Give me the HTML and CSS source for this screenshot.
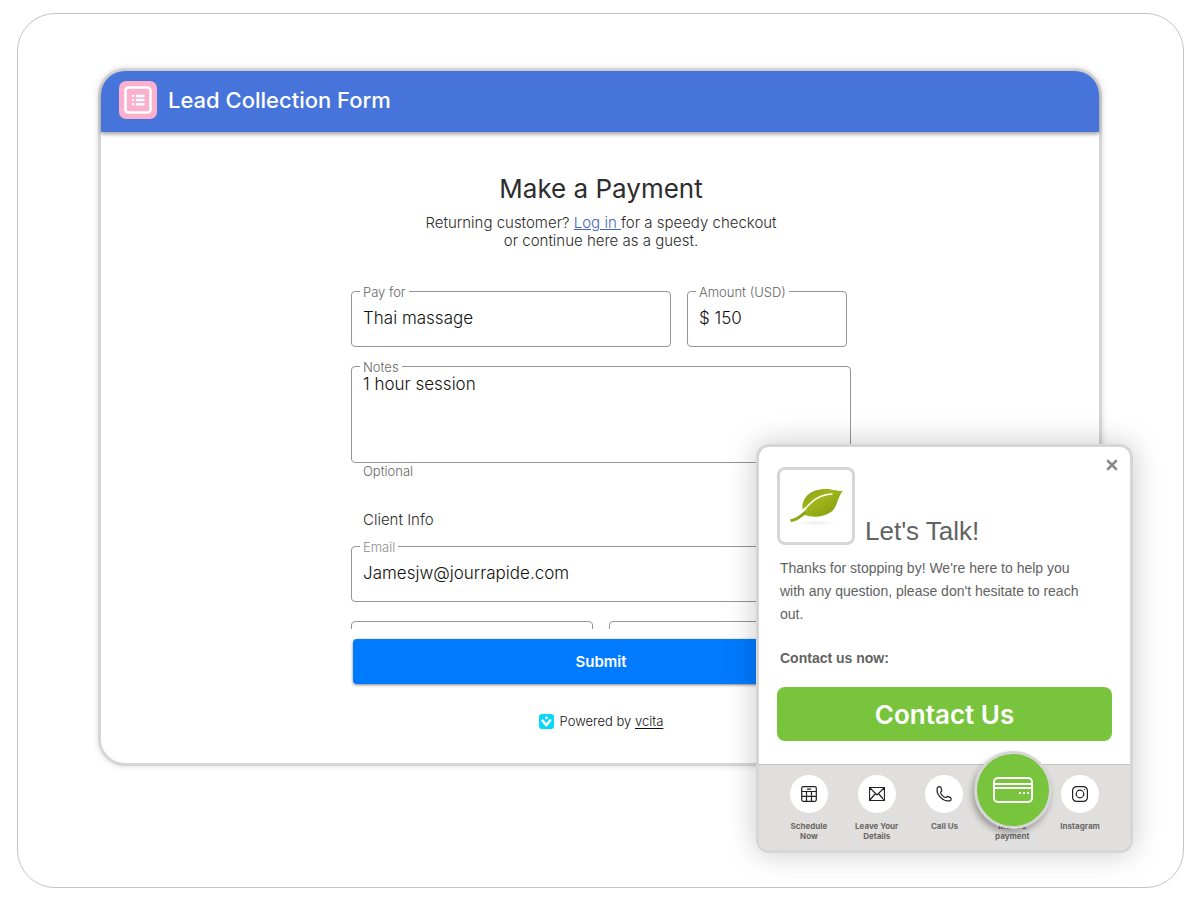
FILE: index.html
```html
<!DOCTYPE html>
<html lang="en">
<head>
    <meta charset="UTF-8">
    <meta name="viewport" content="width=device-width, initial-scale=1.0">
    <title>Lead Collection Form</title>
    <link rel="stylesheet" href="styles.css">
</head>
<body>
    <div class="stage">
        <main class="window">
            <header class="window-header">
                <svg class="form-icon" viewBox="0 0 38 38" aria-hidden="true">
                    <rect width="38" height="38" rx="7" fill="#fbb1cd"/>
                    <rect x="6.5" y="6.5" width="25" height="25" rx="3" fill="none" stroke="#fff" stroke-width="2.6"/>
                    <g stroke="#fff" stroke-width="2.4" stroke-linecap="round">
                        <path d="M14 15h.1M18 15h6.5M14 19h.1M18 19h6.5M14 23.2h.1M18 23.2h6.5"/>
                    </g>
                </svg>
                <span class="window-title">Lead Collection Form</span>
            </header>

            <div class="payment">
                <h1>Make a Payment</h1>
                <p class="intro">Returning customer? <a href="#login">Log in </a>for a speedy checkout<br>or continue here as a guest.</p>

                <form class="payment-form">
                    <div class="row row-pay">
                        <div class="field">
                            <label for="pay-for">Pay for</label>
                            <input type="text" id="pay-for" value="Thai massage">
                        </div>
                        <div class="field">
                            <label for="amount">Amount (USD)</label>
                            <input type="text" id="amount" value="$ 150">
                        </div>
                    </div>
                    <div class="field">
                        <label for="notes">Notes</label>
                        <textarea id="notes">1 hour session</textarea>
                    </div>
                    <div class="helper">Optional</div>

                    <h2>Client Info</h2>
                    <div class="field">
                        <label class="muted" for="email">Email</label>
                        <input type="email" id="email" value="Jamesjw@jourrapide.com">
                    </div>
                    
                    <div class="row row-name">
                        <div class="field"><input type="text" aria-label="First name"></div>
                        <div class="field"><input type="text" aria-label="Last name"></div>
                    </div>
                    <button type="submit" class="submit">Submit</button>
                </form>

                <footer class="powered">
                    <svg viewBox="0 0 15 15" aria-hidden="true">
                        <rect width="15" height="15" rx="3" fill="#05d9f7"/>
                        <circle cx="7.5" cy="3.7" r="1.5" fill="#fff"/>
                        <path d="M3.6 6.6 7.3 11.2 11.3 6.2" fill="none" stroke="#fff" stroke-width="2.5" stroke-linecap="round" stroke-linejoin="round"/>
                    </svg>
                    <span>Powered by <a href="#vcita">vcita</a></span>
                </footer>
            </div>
        </main>

        <aside class="widget">
            <button type="button" class="close" aria-label="Close">
                <svg viewBox="0 0 12 12"><path d="m2 2 8 8M10 2 2 10" stroke="#8c8c8c" stroke-width="2.6" stroke-linecap="round"/></svg>
            </button>
            <div class="widget-body">
                <div class="widget-head">
                    <div class="logo">
                        <svg viewBox="0 0 72 72" aria-hidden="true">
                            <defs>
                                <linearGradient id="leaf" x1="0" y1="0" x2="1" y2="1">
                                    <stop offset="0" stop-color="#84a010"/>
                                    <stop offset=".4" stop-color="#a0b51a"/>
                                    <stop offset="1" stop-color="#7f9a0d"/>
                                </linearGradient>
                                <radialGradient id="shade">
                                    <stop offset="0" stop-color="#ececec"/>
                                    <stop offset="1" stop-color="#fff"/>
                                </radialGradient>
                            </defs>
                            <ellipse cx="36" cy="53" rx="22" ry="3" fill="url(#shade)"/>
                            <path d="M22.5 41C21 26 32 19 46 19c6 0 10 2 17 2C57 27 58 37 51 42c-7 5-18 6-26 3" fill="url(#leaf)"/>
                            <path d="M22 42C30 34 36 25 52 24" fill="none" stroke="#fff" stroke-width="1.5" stroke-linecap="round"/>
                            <path d="M20 43 26 38" stroke="#fff" stroke-width="2.4"/>
                            <path d="M10.500 50.500C18 50 20 46 25.500 42.500" fill="none" stroke="#8ca516" stroke-width="2.800"/>
                        </svg>
                    </div>
                    <h2>Let's Talk!</h2>
                </div>
                <p>Thanks for stopping by! We're here to help you with any question, please don't hesitate to reach out.</p>
                <p class="now">Contact us now:</p>
                <button type="button" class="contact">Contact Us</button>
            </div>
            <nav class="actions">
                <button type="button" class="action">
                    <span class="circle">
                        <svg viewBox="0 0 16 16">
                            <rect x=".7" y=".7" width="14.6" height="14.6" rx="1.5"/>
                            <path d="M.7 5.5h14.6M.7 10.3h14.6M5.5 5.5v9.800M10.500 5.500v9.800M6 3.200h4"/>
                        </svg>
                    </span>
                    <span>Schedule<br>Now</span>
                </button>
                <button type="button" class="action">
                    <span class="circle">
                        <svg viewBox="0 0 16 16">
                            <path d="M.5 1.500h15v13H.5zM.5 1.500 8 9l7.500-7.500M.5 14.500l6-7M15.500 14.500l-6-7"/>
                        </svg>
                    </span>
                    <span>Leave Your<br>Details</span>
                </button>
                <button type="button" class="action">
                    <span class="circle">
                        <svg viewBox="0 0 16 16">
                            <path d="M1.500 1.500c1-.8 2.400-1 3.300-.2l1 3.200c.1.600-1.300 1.200-1.300 1.800 0 2 3.200 5.300 5.200 5.300.7 0 1.200-1.300 1.900-1.200l3 1.200c.6.500.5 2-.1 3C7.500 16.500-.8 8.500 1.500 1.500z"/>
                        </svg>
                    </span>
                    <span>Call Us</span>
                </button>
                <button type="button" class="action">
                    <span class="circle"></span>
                    <span>Make a<br>payment</span>
                    <span class="bubble">
                        <svg viewBox="0 0 40 26">
                            <rect x="1" y="1" width="38" height="24" rx="4"/>
                            <path d="M1 7h38M1 11h38"/>
                            <path d="M26 16h2M30 16h2M34 16h2"/>
                        </svg>
                    </span>
                </button>
                <button type="button" class="action">
                    <span class="circle">
                        <svg viewBox="0 0 16 16">
                            <rect x=".6" y=".6" width="14.800" height="14.800" rx="4"/>
                            <circle cx="8" cy="8" r="3.800"/>
                            <path d="M12 3.500h1"/>
                        </svg>
                    </span>
                    <span>Instagram</span>
                </button>
            </nav>
        </aside>
    </div>
</body>
</html>
```
FILE: styles.css
```css
* {
    box-sizing: border-box;
}

body {
    font-family: Inter, "Liberation Sans", sans-serif;
    background-color: #fff;
    color: #2d2d2d;
    margin: 0;
    padding: 13px 16px 11px 17px;
    min-height: 100vh;
}

h1, h2, p {
    margin: 0;
    font-weight: 400;
}

button, input, textarea {
    font-family: inherit;
    margin: 0;
}

button {
    border: none;
    padding: 0;
    cursor: pointer;
}

.stage {
    position: relative;
    padding: 54px 81px 121px 80px;
    border: 1px solid #c4c4c4;
    border-radius: 38px;
}

.window {
    border: 3px solid #d6d6d6;
    border-radius: 27px;
    background-color: #fff;
    box-shadow: 0 0 6px rgba(0, 0, 0, 0.15);
}

.window-header {
    display: flex;
    align-items: center;
    gap: 11px;
    height: 61px;
    padding: 0 18px 3px;
    border-radius: 24px 24px 0 0;
    background-color: #4674da;
    box-shadow: 0 2px 4px rgba(0, 0, 0, 0.4);
}

.form-icon {
    width: 38px;
    height: 38px;
}

.window-title {
    color: #fff;
    font-size: 22px;
    font-weight: 500;
}

.payment {
    display: flex;
    flex-direction: column;
    align-items: center;
    padding: 39px 20px 32px 22px;
    font-weight: 300;
}

h1 {
    font-size: 26px;
    line-height: 36px;
}

.intro {
    margin-top: 7px;
    font-size: 15px;
    font-weight: 300;
    line-height: 18px;
    text-align: center;
}

.intro a {
    color: #3f66c0;
}

.payment-form {
    width: 100%;
    max-width: 500px;
    margin-top: 41px;
}

.row {
    display: grid;
    gap: 16px;
}

.row-pay {
    grid-template-columns: 2fr 1fr;
    padding-right: 4px;
    margin-bottom: 19px;
}

.row-name {
    grid-template-columns: 1fr 1fr;
    height: 8px;
    margin: 19px 0 10px;
    overflow: hidden;
}

.field {
    position: relative;
}

.field label {
    position: absolute;
    top: -7px;
    left: 9px;
    padding: 0 3px;
    background-color: #fff;
    color: #666;
    font-size: 13px;
    line-height: 16px;
}

.field .muted {
    color: #8c8c8c;
}

.field input, .field textarea {
    display: block;
    width: 100%;
    height: 56px;
    padding: 0 11px 2px;
    border: 1px solid #949494;
    border-radius: 4px;
    background-color: transparent;
    color: #111;
    font-size: 17px;
    font-weight: 300;
}

.field textarea {
    height: 97px;
    padding-top: 7px;
    line-height: 20px;
    resize: none;
}

.helper {
    padding-left: 12px;
    color: #666;
    font-size: 13px;
    line-height: 16px;
}

.payment-form h2 {
    margin: 31px 0 16px;
    padding-left: 12px;
    font-size: 15px;
    font-weight: 300;
    line-height: 20px;
}

.submit {
    display: block;
    width: calc(100% - 4px);
    height: 45px;
    margin: 0 2px;
    border-radius: 4px;
    background-color: #007aff;
    box-shadow: 0 1px 3px rgba(0, 0, 0, 0.5);
    color: #fff;
    font-size: 15px;
    font-weight: 600;
}

.powered {
    display: flex;
    align-items: center;
    gap: 6px;
    margin-top: 27px;
    color: #111;
    font-size: 13px;
    line-height: 20px;
}

.powered svg {
    width: 15px;
    height: 15px;
}

.powered a {
    color: inherit;
    text-underline-offset: 2px;
}

/* Contact widget, floats over the window */
.widget {
    position: absolute;
    right: 50px;
    bottom: 34px;
    width: 377px;
    border: 3px solid #d6d6d6;
    border-radius: 13px;
    background-color: #fff;
    box-shadow: 0 0 30px rgba(0, 0, 0, 0.22);
    color: #626262;
    font-family: "Liberation Sans", Arial, sans-serif;
}

.close {
    position: absolute;
    top: 12px;
    right: 12px;
    width: 12px;
    height: 12px;
    background: none;
}

.close svg {
    display: block;
}

.widget-body {
    padding: 20px 18px 23px;
}

.widget-head {
    display: flex;
    align-items: flex-end;
    gap: 10px;
    margin-bottom: 12px;
}

.logo {
    width: 78px;
    height: 78px;
    border: 3px solid #d6d6d6;
    border-radius: 8px;
}

.logo svg {
    display: block;
}

.widget-head h2 {
    font-size: 26px;
    line-height: 28px;
}

.widget-body p {
    padding: 0 20px 0 3px;
    font-size: 14px;
    line-height: 23px;
}

.widget-body .now {
    margin: 21px 0 17px;
    font-weight: 700;
}

.contact {
    display: block;
    width: 100%;
    height: 54px;
    border-radius: 8px;
    background-color: #79c43d;
    color: #fff;
    font-family: Inter, sans-serif;
    font-size: 26px;
    font-weight: 600;
}

.actions {
    display: grid;
    grid-template-columns: repeat(5, 1fr);
    height: 86px;
    padding: 10px 16px 0;
    border-top: 1px solid #c2c2c2;
    border-radius: 0 0 10px 10px;
    background-color: #e0dfdd;
}

.action {
    position: relative;
    display: flex;
    flex-direction: column;
    align-items: center;
    gap: 8px;
    background: none;
    color: #6b6763;
    font-family: Inter, sans-serif;
    font-size: 8px;
    font-weight: 700;
    line-height: 10px;
}

.circle {
    display: flex;
    align-items: center;
    justify-content: center;
    width: 38px;
    height: 38px;
    border-radius: 50%;
    background-color: #fff;
}

.circle svg {
    width: 16px;
    height: 16px;
    fill: none;
    stroke: #222;
    stroke-width: 1.2;
}

.bubble {
    position: absolute;
    top: -24px;
    left: 50%;
    display: flex;
    align-items: center;
    justify-content: center;
    width: 78px;
    height: 78px;
    margin-left: -38px;
    border: 3px solid #d6d6d6;
    border-radius: 50%;
    background-color: #79c43d;
    box-shadow: -2px 4px 6px rgba(0, 0, 0, 0.3);
}

.bubble svg {
    width: 40px;
    height: 26px;
    fill: none;
    stroke: #fff;
    stroke-width: 2;
}
```
